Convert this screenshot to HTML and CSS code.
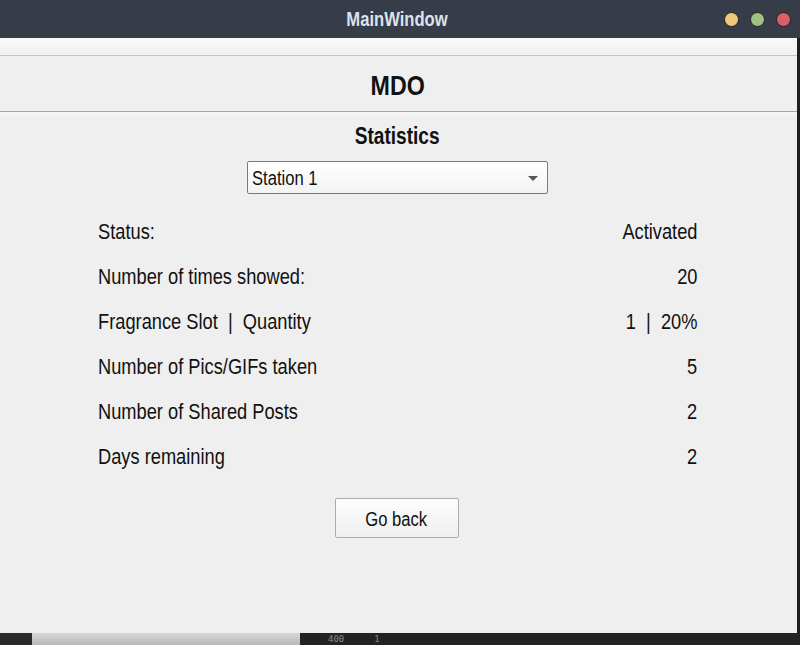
FILE: index.html
```html
<!DOCTYPE html>
<html>
<head>
<meta charset="utf-8">
<link rel="stylesheet" href="styles.css">
</head>
<body>
<div class="screen">
  <div class="titlebar">
    <span class="title nc">MainWindow</span>
    <div class="lights">
      <span class="light yellow"></span>
      <span class="light green"></span>
      <span class="light red"></span>
    </div>
  </div>
  <div class="main">
    <div class="window">
      <div class="menubar"></div>
      <div class="header"><span class="nc">MDO</span></div>
      <div class="content">
        <div class="subtitle"><span class="nc">Statistics</span></div>
        <div class="combo">
          <span class="nl">Station 1</span>
          <span class="arrow"></span>
        </div>
        <div class="rows">
          <div class="row"><span class="nl">Status:</span><span class="nr">Activated</span></div>
          <div class="row"><span class="nl">Number of times showed:</span><span class="nr">20</span></div>
          <div class="row"><span class="nl">Fragrance Slot&nbsp; |&nbsp; Quantity</span><span class="nr">1&nbsp; |&nbsp; 20%</span></div>
          <div class="row"><span class="nl">Number of Pics/GIFs taken</span><span class="nr">5</span></div>
          <div class="row"><span class="nl">Number of Shared Posts</span><span class="nr">2</span></div>
          <div class="row"><span class="nl">Days remaining</span><span class="nr">2</span></div>
        </div>
        <button class="btn"><span class="nc">Go back</span></button>
      </div>
    </div>
    <div class="edge"></div>
  </div>
  <div class="bottom">
    <div class="b-left"></div>
    <div class="b-track"></div>
    <div class="b-num">400</div>
    <div class="b-one">1</div>
  </div>
</div>
</body>
</html>
```
FILE: styles.css
```css
* { box-sizing: border-box; }
html, body { margin: 0; padding: 0; }
body {
  width: 800px;
  height: 645px;
  overflow: hidden;
  background: #252525;
  font-family: "Liberation Sans", Arial, sans-serif;
  color: #111;
}
.nc, .nl, .nr {
  display: inline-block;
  transform: scaleX(0.83);
  white-space: nowrap;
}
.nc { transform-origin: center; }
.nl { transform-origin: left center; }
.nr { transform-origin: right center; }
.screen {
  display: flex;
  flex-direction: column;
  height: 645px;
}
.titlebar {
  height: 38px;
  background: #363c48;
  display: flex;
  align-items: center;
  justify-content: center;
  position: relative;
}
.title {
  color: #dde2ea;
  font-weight: bold;
  font-size: 20px;
  margin-right: 6px;
}
.lights {
  position: absolute;
  right: 9px;
  top: 12px;
  display: flex;
  gap: 11px;
}
.light {
  width: 15px;
  height: 15px;
  border-radius: 50%;
  border: 1px solid #1e2128;
}
.yellow { background: #efc97a; }
.green { background: #9fc282; }
.red { background: #d9606a; }
.main {
  flex: 1;
  display: flex;
}
.window {
  flex: 1;
  background: #efefef;
  display: flex;
  flex-direction: column;
}
.edge {
  width: 3px;
  background: #1f1f1f;
}
.menubar {
  height: 18px;
  background: linear-gradient(#f9f9f9, #f1f1f1);
  border-bottom: 1px solid #c4c4c4;
}
.header {
  height: 56px;
  border-bottom: 1px solid #a6a6a6;
  display: flex;
  align-items: center;
  justify-content: center;
  font-weight: bold;
  font-size: 28px;
  padding-top: 4px;
  padding-right: 2px;
}
.content {
  display: flex;
  flex-direction: column;
  align-items: center;
  background: linear-gradient(#f6f6f6 0px, #efefef 6px);
  flex: 1;
}
.subtitle {
  font-weight: bold;
  font-size: 23px;
  margin-top: 9px;
  margin-right: 2px;
  height: 30px;
  line-height: 30px;
}
.combo {
  margin-top: 10px;
  margin-right: 3px;
  width: 301px;
  height: 33px;
  border: 1px solid #4f86ad;
  border-radius: 2px;
  background: linear-gradient(#ffffff, #f3f3f3);
  display: flex;
  align-items: center;
  justify-content: space-between;
  padding: 2px 9px 0 4px;
  font-size: 20px;
}
.arrow {
  width: 0;
  height: 0;
  border-left: 5px solid transparent;
  border-right: 5px solid transparent;
  border-top: 5px solid #555;
}
.rows {
  margin-top: 15px;
  width: 600px;
  margin-right: 2px;
  display: flex;
  flex-direction: column;
}
.row {
  height: 45px;
  display: flex;
  justify-content: space-between;
  align-items: center;
  font-size: 22px;
}
.btn {
  margin-top: 19px;
  margin-right: 4px;
  width: 124px;
  height: 40px;
  border: 1px solid #ababab;
  border-radius: 2px;
  background: linear-gradient(#fdfdfd, #efefef);
  font-family: inherit;
  font-size: 20px;
  color: #111;
  padding: 3px 0 0 0;
}
.bottom {
  height: 12px;
  display: flex;
  background: #232323;
}
.b-left { width: 32px; background: #2a2a2a; }
.b-track {
  width: 268px;
  background: linear-gradient(#d8d8d8, #b8b8b8);
}
.b-num, .b-one {
  color: #8a8a8a;
  font-family: "DejaVu Sans Mono", monospace;
  font-size: 9px;
  line-height: 12px;
  margin-left: 28px;
}
.b-one { margin-left: 30px; }
```
